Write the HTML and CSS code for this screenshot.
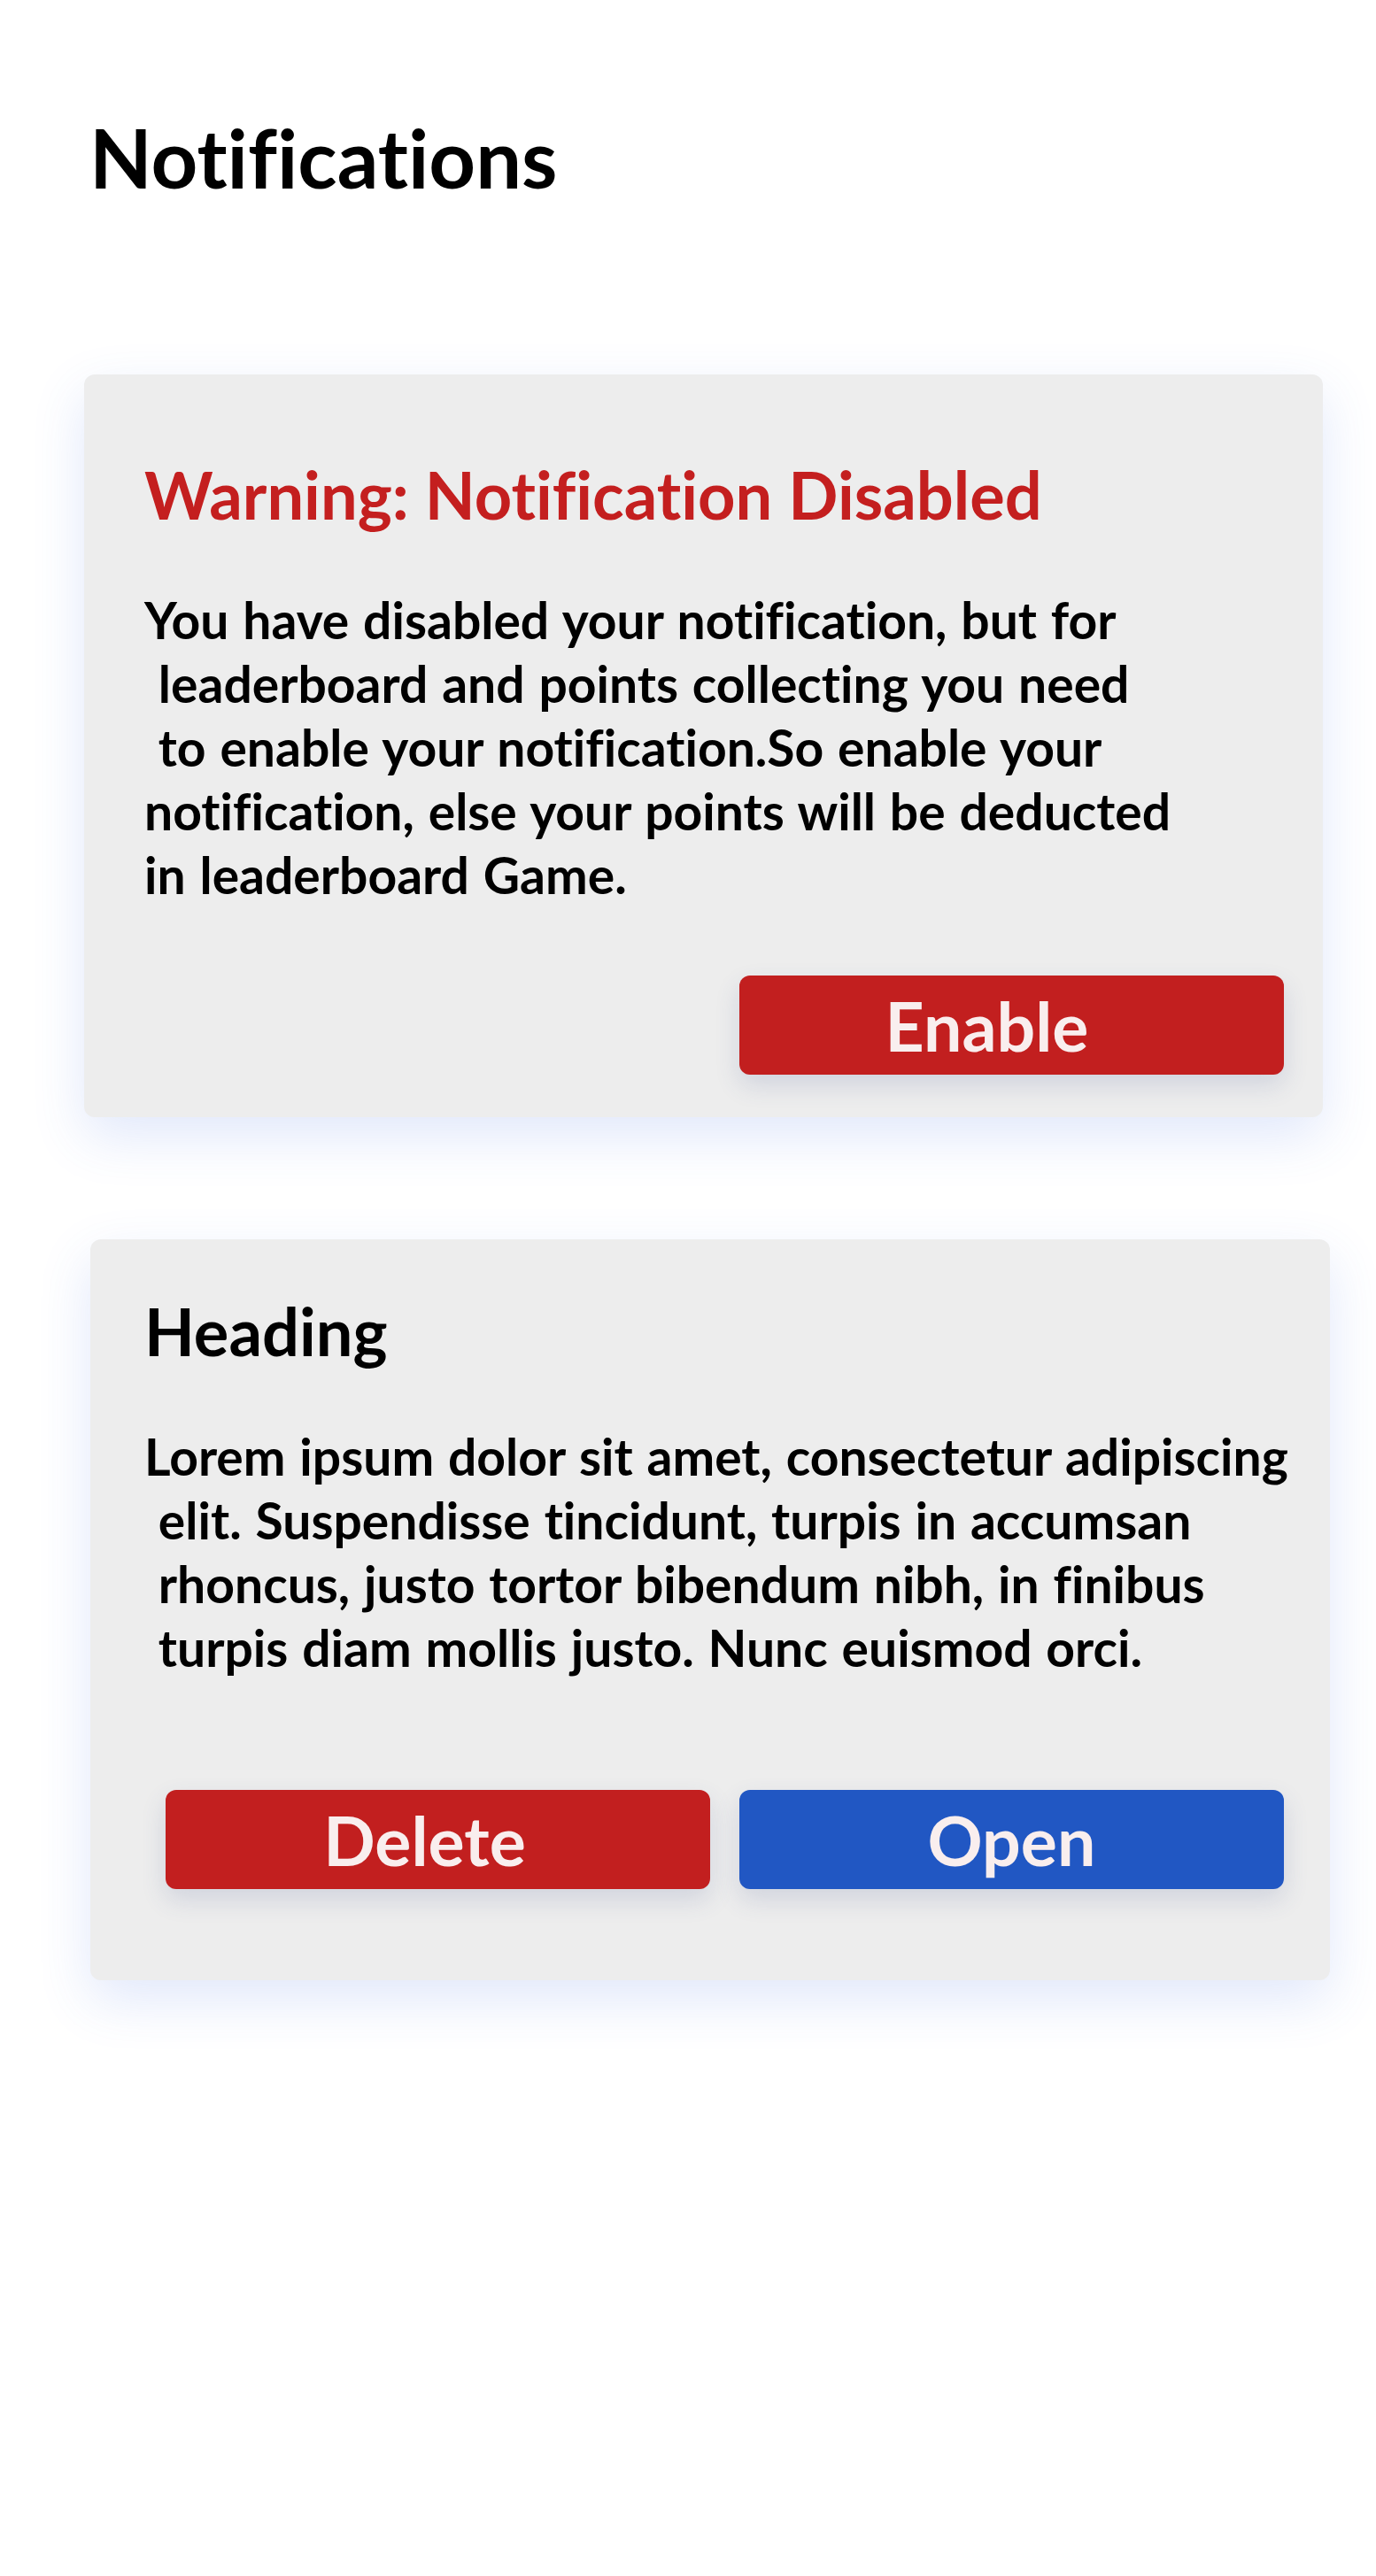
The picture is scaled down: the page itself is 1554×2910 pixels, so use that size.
FILE: index.html
```html
<!DOCTYPE html>
<html lang="en">
<head>
<meta charset="utf-8">
<title>Notifications</title>
<link rel="stylesheet" href="styles.css">
</head>
<body>
<main class="page">
  <h1 class="page-title">Notifications</h1>

  <section class="card card--warning">
    <h2 class="card-title card-title--danger">Warning: Notification Disabled</h2>
    <p class="card-text">You have disabled your notification, but for
 leaderboard and points collecting you need
 to enable your notification.So enable your
notification, else your points will be deducted
in leaderboard Game.</p>
    <div class="actions actions--end">
      <button class="btn btn--red btn--enable">Enable</button>
    </div>
  </section>

  <section class="card card--notice">
    <h2 class="card-title">Heading</h2>
    <p class="card-text">Lorem ipsum dolor sit amet, consectetur adipiscing
 elit. Suspendisse tincidunt, turpis in accumsan
 rhoncus, justo tortor bibendum nibh, in finibus
 turpis diam mollis justo. Nunc euismod orci.</p>
    <div class="actions actions--split">
      <button class="btn btn--red btn--delete">Delete</button>
      <button class="btn btn--blue">Open</button>
    </div>
  </section>
</main>
</body>
</html>
```
FILE: styles.css
```css
* { box-sizing: border-box; }

html, body {
  margin: 0;
  padding: 0;
  background: #ffffff;
}

body {
  font-family: Lato, "Open Sans", sans-serif;
  font-weight: 700;
  color: #000;
  font-variant-ligatures: none;
  font-feature-settings: "liga" 0, "clig" 0;
}

.page {
  width: 1554px;
  min-height: 2910px;
  padding-top: 123px;
}

.page-title {
  margin: 0 0 0 101px;
  font-size: 92px;
  line-height: 110px;
  font-weight: 700;
}

.card {
  background: #ededed;
  border-radius: 12px;
  box-shadow: 0 22px 60px rgba(70, 110, 230, 0.16);
}

.card--warning {
  width: 1399px;
  margin: 190px 0 0 95px;
  padding: 91px 44px 48px 68px;
}

.card--notice {
  width: 1400px;
  margin: 138px 0 0 102px;
  padding: 59px 52px 103px 61px;
}

.card-title {
  margin: 0;
  font-size: 74px;
  line-height: 89px;
  font-weight: 700;
  color: #000;
}

.card-title--danger {
  color: #c41f1f;
}

.card-text {
  margin: 61px 0 0;
  font-size: 57px;
  line-height: 72px;
  white-space: pre;
  word-spacing: 2px;
}

.actions {
  display: flex;
}

.card--warning .actions { margin-top: 78px; }
.card--notice .actions { margin-top: 125px; }

.actions--end { justify-content: flex-end; }

.actions--split {
  justify-content: flex-end;
  gap: 33px;
}

.btn {
  width: 615px;
  height: 112px;
  border: 0;
  border-radius: 12px;
  font-family: Lato, "Open Sans", sans-serif;
  font-weight: 700;
  font-size: 77px;
  line-height: 112px;
  padding: 0;
  color: #f9eeee;
  text-align: center;
  box-shadow: 0 12px 28px rgba(60, 80, 140, 0.16);
  cursor: pointer;
  font-variant-ligatures: none;
}

.btn--red { background: #c21f1f; }
.btn--blue { background: #2157c3; }

.btn--enable { padding-right: 56px; }
.btn--delete { padding-right: 30px; }
```
